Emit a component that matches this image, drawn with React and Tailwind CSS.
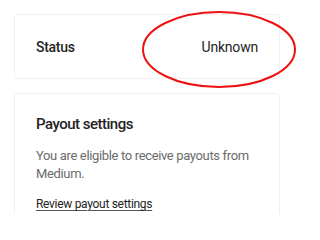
import React from "react";

export default function App() {
  return (
    <div
      className="relative w-[320px] h-[214px] overflow-hidden bg-white p-[14px]"
      style={{ fontFamily: 'Roboto, "Liberation Sans", Arial, sans-serif' }}
    >
      <div className="flex w-[266px] flex-col gap-[14px]">
        <div className="flex h-[65px] items-center justify-between rounded-[4px] border border-[#f0f0f0] px-[21px]">
          <span className="text-[14px] leading-[20px] font-medium tracking-[-0.3px] text-[#242424]">Status</span>
          <span className="text-[14px] leading-[20px] tracking-[-0.2px] text-[#242424]">Unknown</span>
        </div>
        <div className="flex flex-col rounded-[4px] border border-[#f0f0f0] px-[21px] pt-[20px] pb-[20px]">
          <h2 className="text-[15px] leading-[20px] font-medium tracking-[-0.5px] text-[#242424]">
            Payout settings
          </h2>
          <p className="mt-[13px] text-[13px] leading-[18px] tracking-[-0.35px] text-[#6b6b6b]">
            You are eligible to receive payouts from Medium.
          </p>
          <a className="mt-[13px] text-[12px] leading-[16px] tracking-[-0.3px] text-[#242424] underline decoration-[#555] underline-offset-2">
            Review payout settings
          </a>
        </div>
      </div>
      <svg
        className="absolute left-0 top-0"
        width="320"
        height="214"
        viewBox="0 0 320 214"
      >
        <ellipse cx="219" cy="49.5" rx="76" ry="37.5" fill="none" stroke="#ee1111" strokeWidth="2" />
      </svg>
    </div>
  );
}
